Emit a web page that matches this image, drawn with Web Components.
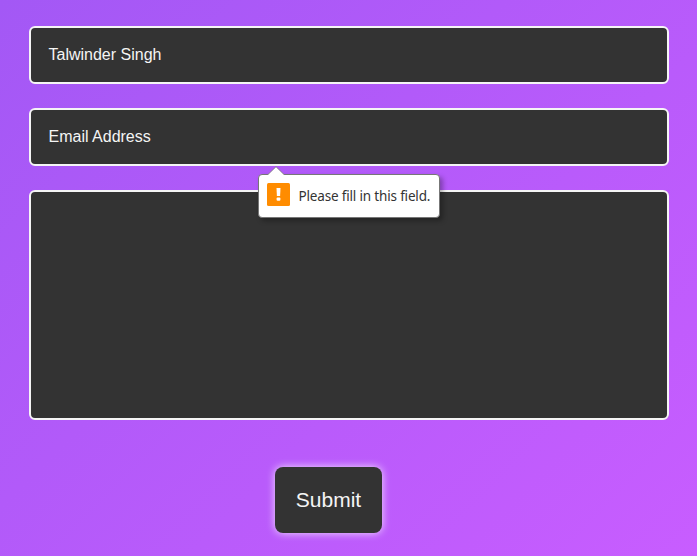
<!DOCTYPE html>
<html lang="en">
<head>
<meta charset="utf-8">
<title>Contact</title>
<style>
html,body{height:100%;margin:0}
body{overflow:hidden;font-family:"Liberation Sans",Arial,sans-serif}
</style>
</head>
<body>
<contact-form>
  <form-field>Talwinder Singh</form-field>
  <form-field>Email Address<validation-tip slot="tip">Please fill in this field.</validation-tip></form-field>
  <form-field large></form-field>
  <submit-button slot="action">Submit</submit-button>
</contact-form>
<script>
function define(name, html) {
  const template = document.createElement('template');
  template.innerHTML = html;
  customElements.define(name, class extends HTMLElement {
    constructor() {
      super();
      this.attachShadow({mode: 'open'}).append(template.content.cloneNode(true));
    }
  });
}

define('contact-form', `<style>
:host{display:flex;flex-direction:column;box-sizing:border-box;width:100%;height:100vh;padding:26px 28px 0 29px;background:linear-gradient(135deg,#a358f5,#c85dff)}
.fields{display:flex;flex-direction:column;gap:24px}
.action{display:flex;justify-content:center;margin-top:47px;padding-right:41px}
</style><div class="fields"><slot></slot></div><div class="action"><slot name="action"></slot></div>`);

define('form-field', `<style>
:host{display:flex;align-items:center;position:relative;box-sizing:border-box;height:58px;padding:0 17.5px;border:2px solid #f5f5f5;border-radius:6px;background:#333;color:#f5f5f5;font-size:16px;line-height:18px}
:host([large]){height:230px}
</style><span><slot></slot></span><slot name="tip"></slot>`);

define('validation-tip', `<style>
:host{display:flex;align-items:center;gap:8.5px;position:absolute;z-index:2;left:227px;top:64px;box-sizing:border-box;width:182px;height:44px;padding:0 8px;border:1px solid #777;border-radius:4px;background:#fff;box-shadow:3px 3px 5px rgba(0,0,0,.3);color:#333;font:13.5px/20px "Noto Sans",sans-serif;white-space:nowrap}
svg{flex:none;display:block}
.arrow{position:absolute;left:8px;top:-9px}
.icon{margin-top:-3px}
.text{letter-spacing:-.17px}
</style>
<svg class="arrow" width="20" height="10" viewBox="0 0 20 10"><path d="M0 10V9L1 8.5 9 .7 17 8.5 18 9V10Z" fill="#fff"/><path d="M0 8.5H1L9 .7 17 8.5H18" fill="none" stroke="#777" stroke-width=".8"/></svg>
<svg class="icon" width="23" height="23" viewBox="0 0 23 23"><rect width="23" height="23" rx="1.5" fill="#ff8c00"/><path d="M9.5 5h4l-.4 8h-3.2z" fill="#fff"/><rect x="9.6" y="14.6" width="3.8" height="3.2" rx="1" fill="#fff"/></svg>
<span class="text"><slot></slot></span>`);

define('submit-button', `<style>
:host{display:flex;align-items:center;justify-content:center;box-sizing:border-box;width:107px;height:66px;border-radius:8px;background:#333;color:#f5f5f5;font-size:21px;line-height:24px;box-shadow:0 0 8px rgba(255,255,255,.8)}
</style><slot></slot>`);
</script>
</body>
</html>
